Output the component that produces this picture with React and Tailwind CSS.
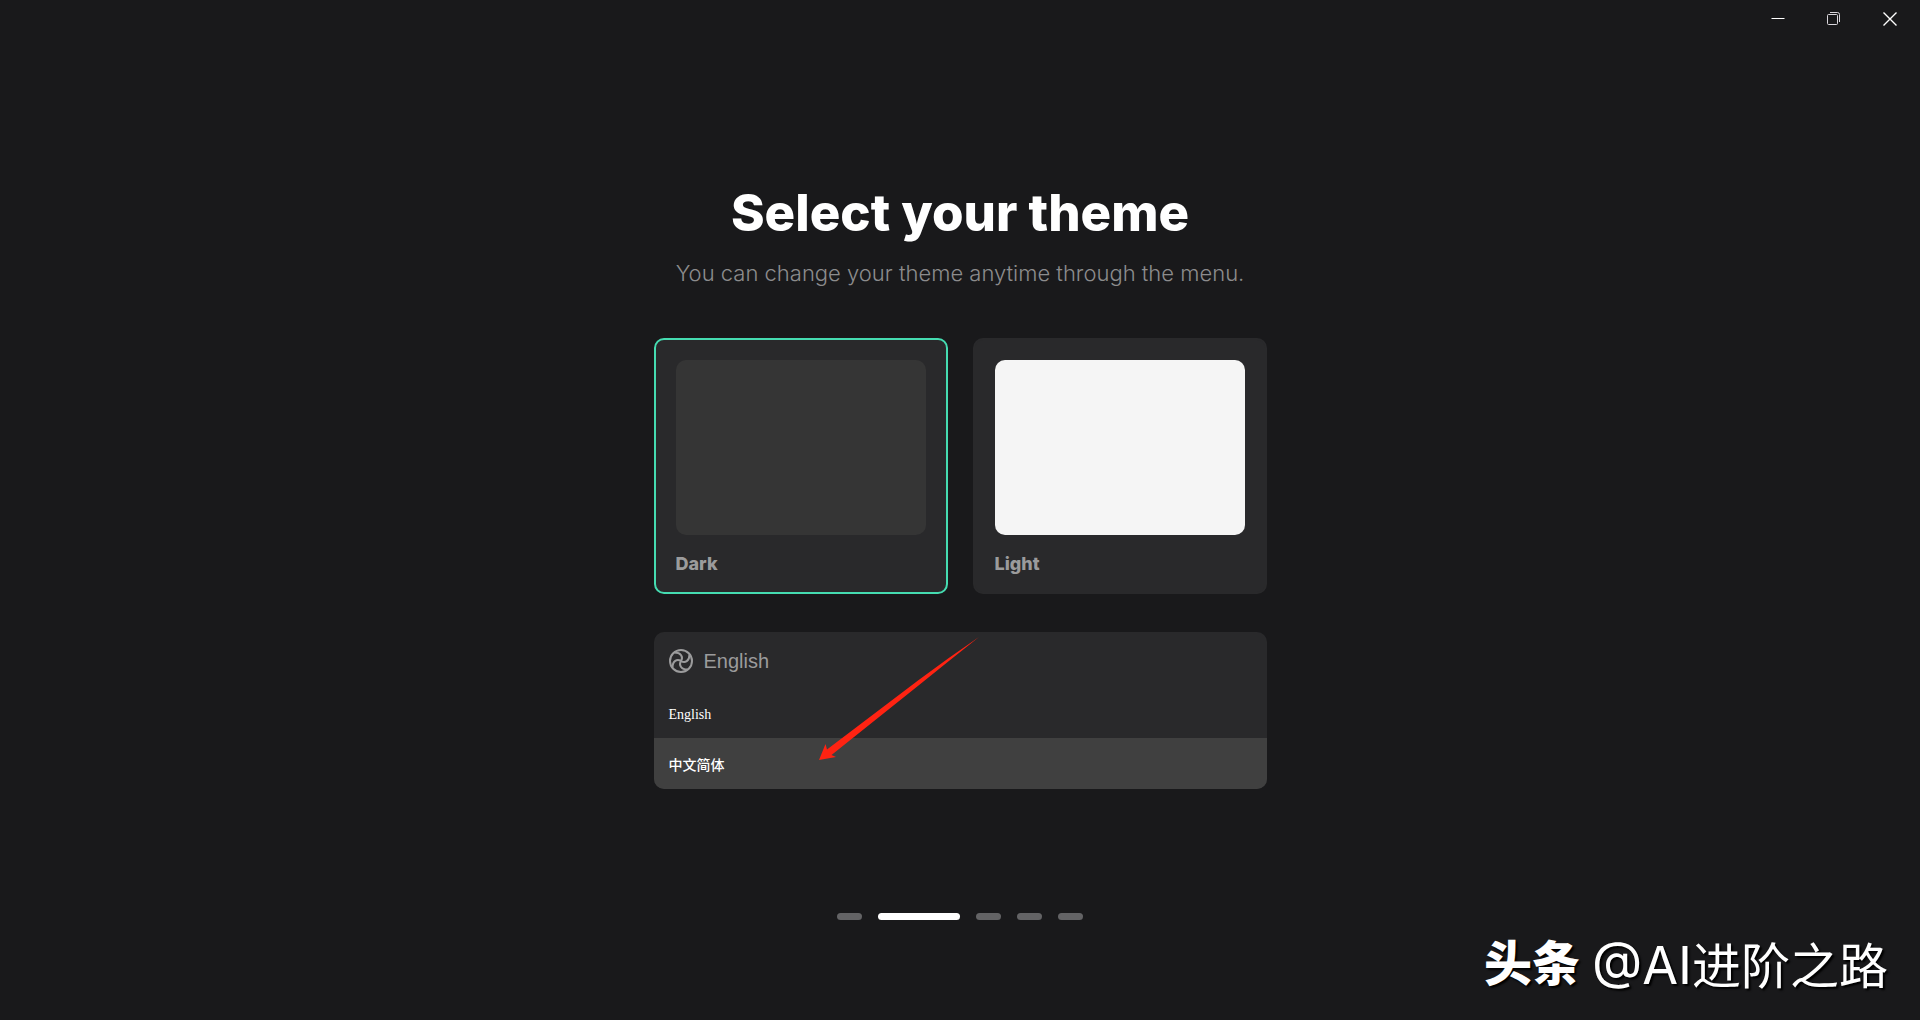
import React, { useState } from "react";

const themes = [
  { id: "dark", label: "Dark", preview: "bg-[#353535]" },
  { id: "light", label: "Light", preview: "bg-[#f5f5f5]" },
];

const languages = [
  { id: "en", label: "English" },
  { id: "zh", label: "中文简体" },
];

const steps = ["welcome", "theme", "import", "privacy", "done"];

function WindowControls() {
  return (
    <div className="flex justify-end pr-0.5 text-white">
      <button aria-label="Minimize" className="flex h-[38px] w-14 items-center justify-center">
        <svg width="14" height="14" viewBox="0 0 14 14" fill="none" stroke="currentColor">
          <path d="M0.5 6.5h13" />
        </svg>
      </button>
      <button aria-label="Restore" className="flex h-[38px] w-14 items-center justify-center">
        <svg width="14" height="14" viewBox="0 0 14 14" fill="none" stroke="#dad7dd">
          <rect x="0.5" y="2.5" width="10" height="10" rx="1" />
          <path d="M3 0.5h7.5a2 2 0 0 1 2 2V10" />
        </svg>
      </button>
      <button aria-label="Close" className="flex h-[38px] w-14 items-center justify-center">
        <svg width="14" height="14" viewBox="0 0 14 14" fill="none" stroke="currentColor" strokeWidth="1.4">
          <path d="M0.5 0.5l13 13M13.5 0.5l-13 13" />
        </svg>
      </button>
    </div>
  );
}

function SwirlIcon() {
  return (
    <svg width="24" height="24" viewBox="0 0 24 24" fill="none" stroke="#9b9b9c" strokeWidth="2">
      <circle cx="12" cy="12" r="11" />
      {[0, 90, 180, 270].map((deg) => (
        <path key={deg} d="M12 12C14.500 8 12 3.500 5.500 3.500" transform={`rotate(${deg} 12 12)`} />
      ))}
    </svg>
  );
}

export default function App() {
  const [theme, setTheme] = useState("dark");
  const [language, setLanguage] = useState("en");

  return (
    <div className="relative flex min-h-screen flex-col bg-[#19191b] font-['Inter','Noto_Sans_CJK_SC',sans-serif]">
      <WindowControls />

      <main className="mx-auto flex w-full max-w-[613px] flex-1 flex-col pt-[145px]">
        <h1 className="text-center text-[51px] leading-[60px] font-extrabold text-white">Select your theme</h1>
        <p className="mt-4 text-center text-[22px] leading-7 font-light whitespace-nowrap text-[#8c8c8d]">
          You can change your theme anytime through the menu.
        </p>

        {/* Theme cards */}
        <div className="mt-[51px] grid grid-cols-2 gap-[25px]">
          {themes.map((t) => (
            <label
              key={t.id}
              className={`relative flex h-64 cursor-pointer flex-col rounded-[10px] border-2 bg-[#29292b] px-5 pt-5 ${
                theme === t.id ? "border-[#45dcb1]" : "border-[#29292b]"
              }`}
            >
              <input
                type="radio"
                name="theme"
                value={t.id}
                checked={theme === t.id}
                onChange={() => setTheme(t.id)}
                className="sr-only"
              />
              <span className={`h-[175px] shrink-0 rounded-[10px] ${t.preview}`} />
              <span className="mt-[17px] text-lg leading-6 font-extrabold text-[#9b9b9c]">{t.label}</span>
            </label>
          ))}
        </div>

        {/* Language picker */}
        <div className="relative mt-[38px] rounded-[10px] bg-[#29292b]">
          <div className="flex h-[55px] items-center gap-[11px] px-[15px] pt-0.5">
            <SwirlIcon />
            <select
              aria-label="Language"
              value={language}
              onChange={(e) => setLanguage(e.target.value)}
              className="flex-1 appearance-none bg-transparent font-['Liberation_Sans','Noto_Sans_CJK_SC',sans-serif] text-xl leading-7 text-[#9b9b9c] outline-none"
            >
              {languages.map((l) => (
                <option key={l.id} value={l.id}>
                  {l.label}
                </option>
              ))}
            </select>
          </div>
          <ul className="overflow-hidden rounded-b-[10px]">
            {languages.map((l) => (
              <li key={l.id}>
                <button
                  onClick={() => setLanguage(l.id)}
                  className={`flex h-[51px] w-full items-center px-[15px] pt-1 font-['Liberation_Serif','Noto_Sans_CJK_SC',serif] text-sm font-medium text-white ${
                    l.id === "zh" ? "bg-[#404040]" : "bg-[#29292b]"
                  }`}
                >
                  {l.label}
                </button>
              </li>
            ))}
          </ul>
          <svg
            className="pointer-events-none absolute top-1 left-[164px]"
            width="162"
            height="126"
            viewBox="0 0 162 126"
            fill="#ff2312"
          >
            <path d="M1 124L7.500 108L9 113.500L100 44.500Q130 22 161 1Q132 24 103 47.500L13.500 119L18 121Z" />
          </svg>
        </div>

        {/* Step indicator */}
        <div className="mt-[124px] flex justify-center gap-4 pb-[100px]">
          {steps.map((s) => (
            <span
              key={s}
              className={`h-[7px] rounded-full ${s === "theme" ? "w-[82px] bg-white" : "w-[25px] bg-[#636365]"}`}
            />
          ))}
        </div>
      </main>

      <div className="pointer-events-none absolute right-8 bottom-4 flex items-center gap-3 whitespace-nowrap text-white [text-shadow:2px_2px_2px_#000]">
        <span className="pb-1 text-[48px] leading-[72px] font-black">头条</span>
        <span className="flex items-baseline text-[49px] leading-[72px]">
          <span className="text-[52px]">@AI</span>
          <span>进阶之路</span>
        </span>
      </div>
    </div>
  );
}
